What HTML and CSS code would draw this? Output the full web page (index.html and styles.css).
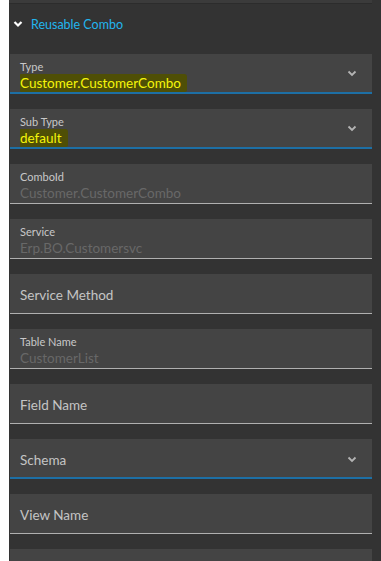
FILE: index.html
```html
<!DOCTYPE html>
<html lang="en">
  <head>
    <meta charset="UTF-8" />
    <meta name="viewport" content="width=device-width, initial-scale=1.0" />
    <title>Reusable Combo</title>
    <link rel="stylesheet" href="styles.css">
  </head>
  <body>
    <div class="page">
      <div class="edge"></div>
      <div class="panel">
        <div class="panel-top"></div>
        <div class="section-header">
          <svg class="section-chevron" width="10" height="8" viewBox="0 0 10 8">
            <path d="M1.5 2 L5 5.5 L8.5 2" fill="none" stroke="#fff" stroke-width="2.2" />
          </svg>
          <span class="section-title">Reusable Combo</span>
        </div>
        <div class="field-list">
          <div class="field field-select">
            <div class="field-body">
              <span class="field-label">Type</span>
              <span class="field-value"><mark class="marker">Customer.CustomerCombo</mark></span>
            </div>
            <svg class="select-chevron" width="10" height="7" viewBox="0 0 10 7">
              <path d="M1.5 1.5 L5 5 L8.5 1.5" fill="none" stroke="#b4b4b4" stroke-width="1.8" />
            </svg>
          </div>
          <div class="field field-select">
            <div class="field-body">
              <span class="field-label">Sub Type</span>
              <span class="field-value"><mark class="marker">default</mark></span>
            </div>
            <svg class="select-chevron" width="10" height="7" viewBox="0 0 10 7">
              <path d="M1.5 1.5 L5 5 L8.5 1.5" fill="none" stroke="#b4b4b4" stroke-width="1.8" />
            </svg>
          </div>
          <div class="field">
            <div class="field-body">
              <span class="field-label">ComboId</span>
              <span class="field-value disabled">Customer.CustomerCombo</span>
            </div>
          </div>
          <div class="field">
            <div class="field-body">
              <span class="field-label">Service</span>
              <span class="field-value disabled">Erp.BO.Customersvc</span>
            </div>
          </div>
          <div class="field field-empty">
            <span class="field-placeholder">Service Method</span>
          </div>
          <div class="field">
            <div class="field-body">
              <span class="field-label">Table Name</span>
              <span class="field-value disabled">CustomerList</span>
            </div>
          </div>
          <div class="field field-empty">
            <span class="field-placeholder">Field Name</span>
          </div>
          <div class="field field-select field-empty">
            <span class="field-placeholder">Schema</span>
            <svg class="select-chevron" width="10" height="7" viewBox="0 0 10 7">
              <path d="M1.5 1.5 L5 5 L8.5 1.5" fill="none" stroke="#b4b4b4" stroke-width="1.8" />
            </svg>
          </div>
          <div class="field field-empty">
            <span class="field-placeholder">View Name</span>
          </div>
          <div class="field field-empty"></div>
        </div>
      </div>
    </div>
  </body>
</html>
```

FILE: styles.css
```css
* {
  margin: 0;
  padding: 0;
  box-sizing: border-box;
}
body {
  font-family: Lato, "Open Sans", Arial, sans-serif;
  background: #333333;
  height: 561px;
  overflow: hidden;
}
.page {
  display: flex;
  min-height: 561px;
}
.edge {
  width: 9px;
  flex-shrink: 0;
  background: #ffffff;
}
.panel {
  flex: 1;
  background: #333333;
  padding-right: 9px;
}
.panel-top {
  height: 4px;
  background: #3b3b3b;
  border-bottom: 1px solid #2c2c2c;
}
.section-header {
  display: flex;
  align-items: center;
  height: 40px;
  padding-left: 2px;
  gap: 8px;
}
.section-chevron {
  margin-left: 2px;
}
.section-title {
  color: #22b5ee;
  font-size: 12.5px;
}
.field-list {
  display: flex;
  flex-direction: column;
  gap: 15px;
  padding-top: 10px;
  padding-left: 1px;
}
.field {
  height: 40px;
  background: #444444;
  border-bottom: 1px solid #b0b0b0;
  display: flex;
  align-items: center;
  padding: 0 15px 0 10px;
  flex-shrink: 0;
}
.field-select {
  border-bottom: 2px solid #1d6fa5;
}
.field-body {
  flex: 1;
  align-self: flex-start;
  display: flex;
  flex-direction: column;
  padding-top: 6px;
}
.field-label {
  font-size: 11px;
  color: #c8c8c8;
  line-height: 14px;
}
.field-value {
  font-size: 13.5px;
  line-height: 18px;
  color: #cfcfcf;
}
.field-value.disabled {
  color: #686868;
}
.marker {
  color: #f5f50a;
  background: #4f4f06;
  padding: 1px 6px 1px 0;
  border-radius: 1px 3px 2px 1px;
}
.field-empty {
  padding-top: 3px;
}
.field-placeholder {
  flex: 1;
  font-size: 13.5px;
  color: #c4c4c4;
}
.select-chevron {
  flex-shrink: 0;
}
```
